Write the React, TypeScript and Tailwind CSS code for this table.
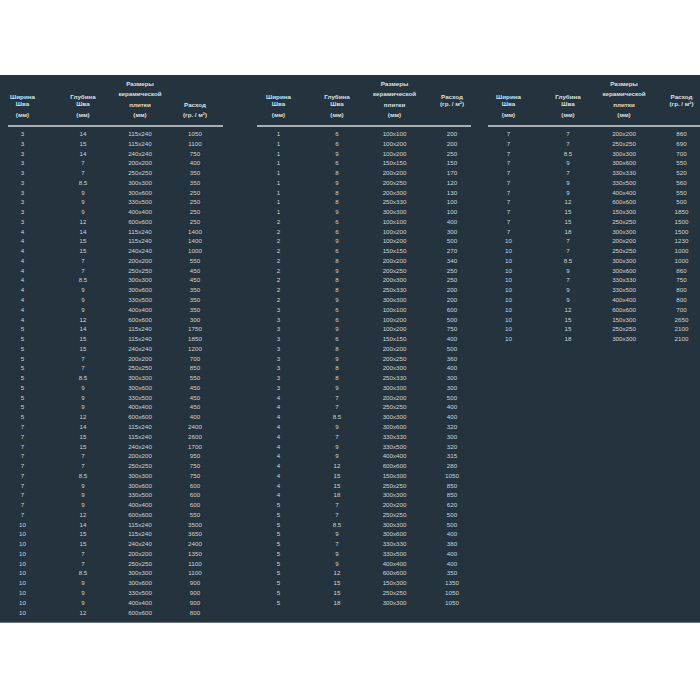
const t1 = [
  '3|14|115x240|1050', '3|15|115x240|1100', '3|14|240x240|750', '3|7|200x200|400', '3|7|250x250|350',
  '3|8.5|300x300|350', '3|9|300x600|250', '3|9|330x500|250', '3|9|400x400|250', '3|12|600x600|250',
  '4|14|115x240|1400', '4|15|115x240|1400', '4|15|240x240|1000', '4|7|200x200|550', '4|7|250x250|450',
  '4|8.5|300x300|450', '4|9|300x600|350', '4|9|330x500|350', '4|9|400x400|350', '4|12|600x600|300',
  '5|14|115x240|1750', '5|15|115x240|1850', '5|15|240x240|1200', '5|7|200x200|700', '5|7|250x250|850',
  '5|8.5|300x300|550', '5|9|300x600|450', '5|9|330x500|450', '5|9|400x400|450', '5|12|600x600|400',
  '7|14|115x240|2400', '7|15|115x240|2600', '7|15|240x240|1700', '7|7|200x200|950', '7|7|250x250|750',
  '7|8.5|300x300|750', '7|9|300x600|600', '7|9|330x500|600', '7|9|400x400|600', '7|12|600x600|550',
  '10|14|115x240|3500', '10|15|115x240|3650', '10|15|240x240|2400', '10|7|200x200|1350', '10|7|250x250|1100',
  '10|8.5|300x300|1100', '10|9|300x600|900', '10|9|330x500|900', '10|9|400x400|900', '10|12|600x600|800',
];

const t2 = [
  '1|6|100x100|200', '1|6|100x200|200', '1|9|100x200|250', '1|6|150x150|150', '1|8|200x200|170',
  '1|9|200x250|120', '1|8|200x300|130', '1|8|250x330|100', '1|9|300x300|100',
  '2|6|100x100|400', '2|6|100x200|300', '2|9|100x200|500', '2|6|150x150|270', '2|8|200x200|340',
  '2|9|200x250|250', '2|8|200x300|250', '2|8|250x330|200', '2|9|300x300|200',
  '3|6|100x100|600', '3|6|100x200|500', '3|9|100x200|750', '3|6|150x150|400', '3|8|200x200|500',
  '3|9|200x250|360', '3|8|200x300|400', '3|8|250x330|300', '3|9|300x300|300',
  '4|7|200x200|500', '4|7|250x250|400', '4|8.5|300x300|400', '4|9|300x600|320', '4|7|330x330|300',
  '4|9|330x500|320', '4|9|400x400|315', '4|12|600x600|280', '4|15|150x300|1050', '4|15|250x250|850',
  '4|18|300x300|850',
  '5|7|200x200|620', '5|7|250x250|500', '5|8.5|300x300|500', '5|9|300x600|400', '5|7|330x330|380',
  '5|9|330x500|400', '5|9|400x400|400', '5|12|600x600|350', '5|15|150x300|1350', '5|15|250x250|1050',
  '5|18|300x300|1050',
];

const t3 = [
  '7|7|200x200|860', '7|7|250x250|690', '7|8.5|300x300|700', '7|9|300x600|550', '7|7|330x330|520',
  '7|9|330x500|560', '7|9|400x400|550', '7|12|600x600|500', '7|15|150x300|1850', '7|15|250x250|1500',
  '7|18|300x300|1500',
  '10|7|200x200|1230', '10|7|250x250|1000', '10|8.5|300x300|1000', '10|9|300x600|860', '10|7|330x330|750',
  '10|9|330x500|800', '10|9|400x400|800', '10|12|600x600|700', '10|15|150x300|2650', '10|15|250x250|2100',
  '10|18|300x300|2100',
];

const line = 'h-[10.3px] leading-[10.3px] whitespace-nowrap';
const cell = 'flex justify-center';

function Header({ cols, lowRate }: { cols: string; lowRate?: boolean }) {
  return (
    <div className={`grid h-[50px] font-bold text-[#dfe3e6] ${cols}`}>
      {['Ширина', 'Глубина'].map((w) => (
        <div key={w} className={`${cell} pt-[17px]`}>
          <div className="flex flex-col items-center">
            <div className={line}>{w}</div>
            <div className={`${line} mt-[-3px]`}>Шва</div>
            <div className={line}>(мм)</div>
          </div>
        </div>
      ))}
      <div className={`${cell} pt-[4px]`}>
        <div className="flex flex-col items-center">
          <div className={line}>Размеры</div>
          <div className={line}>керамической</div>
          <div className={line}>плитки</div>
          <div className={line}>(мм)</div>
        </div>
      </div>
      <div className={`${cell} ${lowRate ? 'pt-[24.5px]' : 'pt-[17px]'}`}>
        <div className="flex flex-col items-center">
          <div className={line}>Расход</div>
          <div className={`${line} ${lowRate ? '' : 'mt-[-3px]'}`}>(гр. / м²)</div>
        </div>
      </div>
    </div>
  );
}

function Table({
  rows,
  cols,
  className,
  ruleClass,
  lowRate,
}: {
  rows: string[];
  cols: string;
  className: string;
  ruleClass: string;
  lowRate?: boolean;
}) {
  return (
    <div className={`shrink-0 opacity-[0.99] ${className}`}>
      <Header cols={cols} lowRate={lowRate} />
      <div className={`h-[2px] bg-[#a9b1b6] ${ruleClass}`} />
      <div className="mt-[2px]">
        {rows.map((r, i) => (
          <div key={i} className={`grid h-[9.78px] leading-[9.78px] ${cols}`}>
            {r.split('|').map((v, j) => (
              <div key={j} className={cell}>
                <span className="whitespace-nowrap">{v}</span>
              </div>
            ))}
          </div>
        ))}
      </div>
    </div>
  );
}

export default function App() {
  return (
    <div className="w-[700px] h-[700px] bg-white pt-[75px] overflow-hidden antialiased">
      <div
        className="flex h-[548px] overflow-hidden bg-[#24333d] text-[#d3d8db] text-[6.2px] border-b border-[#6b7880]"
        style={{ fontFamily: '"Liberation Sans", Arial, sans-serif' }}
      >
        <Table rows={t1} cols="grid-cols-[45px_76px_38px_72px]" className="w-[231px]" ruleClass="ml-[8px] w-[215px]" lowRate />
        <Table rows={t2} cols="grid-cols-[57px_60px_55px_60px]" className="w-[232px] ml-[19px]" ruleClass="ml-[7px] w-[214px]" />
        <Table rows={t3} cols="grid-cols-[53px_66px_46px_69px]" className="w-[234px]" ruleClass="ml-[6px] w-[212px]" />
      </div>
    </div>
  );
}
